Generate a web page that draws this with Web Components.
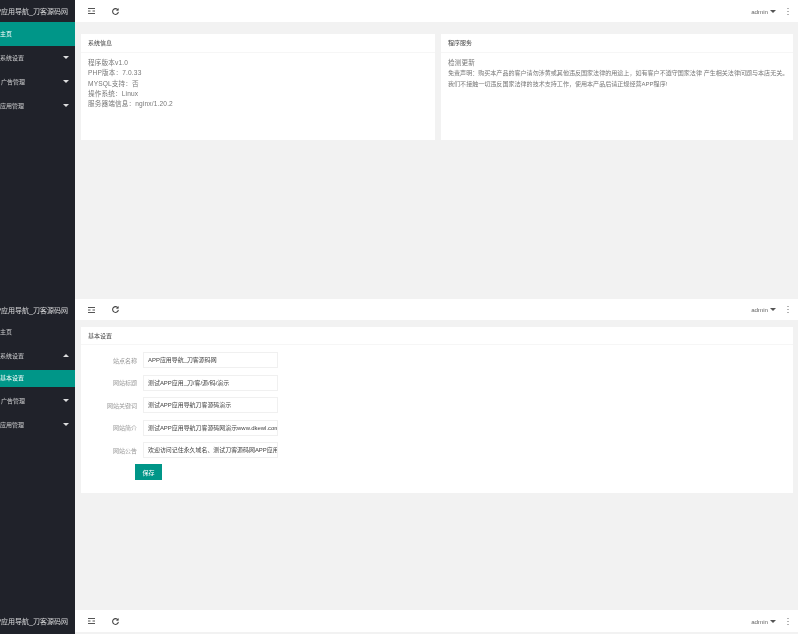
<!DOCTYPE html>
<html lang="zh">
<head>
<meta charset="utf-8">
<title>APP应用导航</title>
<style>
  html, body { margin: 0; height: 100%; overflow: hidden; background: #f2f2f2; }
  body { font: 7px "Liberation Sans", "Noto Sans CJK SC", sans-serif; color: #666; }
</style>
</head>
<body>
  <admin-screen style="--h:299px;--bar:22px">
    <nav-item slot="nav" active>主页</nav-item>
    <nav-item slot="nav" caret="down">系统设置</nav-item>
    <nav-item slot="nav" caret="down" indent="1">广告管理</nav-item>
    <nav-item slot="nav" caret="down">应用管理</nav-item>
    <card-row>
      <info-card heading="系统信息">
        <div class="big">程序版本v1.0<br>PHP版本：7.0.33<br>MYSQL支持：否<br>操作系统：Linux<br>服务器端信息：nginx/1.20.2</div>
      </info-card>
      <info-card heading="程序服务">
        <div class="big">检测更新</div>
        <div class="small">免责声明：购买本产品的客户请勿涉黄或其他违反国家法律的用途上，如有客户不遵守国家法律 产生相关法律问题与本店无关。<br>我们不接触一切违反国家法律的技术支持工作，使用本产品后请正规经营APP程序!</div>
      </info-card>
    </card-row>
  </admin-screen>

  <admin-screen style="--h:311px;--bar:21px">
    <nav-item slot="nav">主页</nav-item>
    <nav-item slot="nav" caret="up">系统设置</nav-item>
    <nav-sub slot="nav">基本设置</nav-sub>
    <nav-item slot="nav" caret="down" indent="1">广告管理</nav-item>
    <nav-item slot="nav" caret="down">应用管理</nav-item>
    <settings-form>
      <form-row label="站点名称">APP应用导航_刀客源码网</form-row>
      <form-row label="网站标题">测试APP应用_刀/客/源/码/演示</form-row>
      <form-row label="网站关键词">测试APP应用导航刀客源码演示</form-row>
      <form-row label="网站简介">测试APP应用导航刀客源码网演示www.dkewl.com</form-row>
      <form-row label="网站公告">欢迎访问记住永久域名、测试刀客源码网APP应用导航</form-row>
    </settings-form>
  </admin-screen>

  <admin-screen style="--h:24px;--bar:22px"></admin-screen>

<script>
class AdminScreen extends HTMLElement {
  constructor() {
    super();
    this.attachShadow({mode: 'open'}).innerHTML = `
      <style>
        :host { display: grid; grid-template-columns: 75px 1fr; height: var(--h); background: #f2f2f2; filter: blur(.35px); }
        .side { background: #20222a; overflow: hidden; }
        .brand { height: var(--bar); display: flex; justify-content: flex-end; align-items: center;
                 padding-right: 7px; font-size: 7px; color: rgba(255,255,255,.8); white-space: nowrap; }
        .main { min-width: 0; display: flex; flex-direction: column; }
        .top { height: var(--bar); flex: none; background: #fff; display: flex; align-items: center; padding: 0 9px 0 13px; color: #555; }
        .top svg { display: block; }
        .refresh { margin-left: 17px; }
        .user { margin-left: auto; display: flex; align-items: center; gap: 2px; font-size: 6.2px; color: #666; }
        .user i { border: 3px solid transparent; border-top-color: #555; border-bottom: 0; width: 0; height: 0; }
        .more { margin-left: 11px; }
      </style>
      <div class="side">
        <div class="brand"><span>APP应用导航_刀客源码网</span></div>
        <slot name="nav"></slot>
      </div>
      <div class="main">
        <div class="top">
          <svg width="7" height="6" viewBox="0 0 7 6" fill="none" stroke="#555" stroke-width="1"><path d="M0 .5h7M0 3h2.5M4.5 3h2.5M0 5.5h7"/></svg>
          <svg class="refresh" width="7" height="7" viewBox="0 0 8 8" fill="none" stroke="#444" stroke-width="1.2"><path d="M6.8 2.2A3.3 3.3 0 1 0 7.3 4.5"/><path d="M7.2.4v2.3H4.9" stroke-width=".9"/></svg>
          <div class="user"><span>admin</span><i></i></div>
          <svg class="more" width="2" height="7" viewBox="0 0 2 7" fill="#666"><rect x=".5" width="1" height="1"/><rect x=".5" y="3" width="1" height="1"/><rect x=".5" y="6" width="1" height="1"/></svg>
        </div>
        <slot></slot>
      </div>`;
  }
}

class NavItem extends HTMLElement {
  constructor() {
    super();
    this.attachShadow({mode: 'open'}).innerHTML = `
      <style>
        :host { display: flex; align-items: center; box-sizing: border-box; height: 24px; padding: 0 6px 1px 0; font-size: 6px; color: rgba(255,255,255,.75); }
        :host([active]) { background: #009688; color: #fff; }
        :host([indent]) { padding-left: 1px; }
        span { flex: 1; white-space: nowrap; }
        i { width: 0; height: 0; border: 3px solid transparent; }
        i.down { border-top-color: rgba(255,255,255,.85); border-bottom: 0; }
        i.up { border-bottom-color: rgba(255,255,255,.85); border-top: 0; }
      </style>
      <span><slot></slot></span><i></i>`;
  }
  connectedCallback() {
    this.shadowRoot.querySelector('i').className = this.getAttribute('caret') || '';
  }
}

class NavSub extends HTMLElement {
  constructor() {
    super();
    this.attachShadow({mode: 'open'}).innerHTML = `
      <style>
        :host { display: block; padding: 2px 0; }
        div { height: 17px; line-height: 17px; background: #009688; color: #fff; font-size: 6px; white-space: nowrap; }
      </style>
      <div><slot></slot></div>`;
  }
}

class CardRow extends HTMLElement {
  constructor() {
    super();
    this.attachShadow({mode: 'open'}).innerHTML = `
      <style>
        :host { display: grid; grid-template-columns: 354px 352px; gap: 6px; padding: 12px 0 0 6px; }
      </style>
      <slot></slot>`;
  }
}

class InfoCard extends HTMLElement {
  constructor() {
    super();
    this.attachShadow({mode: 'open'}).innerHTML = `
      <style>
        :host { display: block; height: 106px; background: #fff; }
        .head { height: 18px; line-height: 19px; padding: 0 7px; font-size: 6px; color: #444; border-bottom: 1px solid #f6f6f6; }
        .body { padding: 5px 7px; }
        ::slotted(.big) { font-size: 6.6px; letter-spacing: .15px; line-height: 10.3px; color: #777; }
        ::slotted(.small) { font-size: 6.05px; line-height: 10.3px; color: #777; white-space: nowrap; }
      </style>
      <div class="head"></div>
      <div class="body"><slot></slot></div>`;
  }
  connectedCallback() {
    this.shadowRoot.querySelector('.head').textContent = this.getAttribute('heading');
  }
}

class SettingsForm extends HTMLElement {
  constructor() {
    super();
    this.attachShadow({mode: 'open'}).innerHTML = `
      <style>
        :host { display: block; margin: 7px 5px 0 6px; height: 166px; background: #fff; }
        .head { height: 17px; line-height: 18px; padding: 0 7px; font-size: 6px; color: #444; border-bottom: 1px solid #f6f6f6; }
        .rows { display: flex; flex-direction: column; gap: 6.5px; padding: 7px 0 0; }
        button { display: block; margin: 6px 0 0 54px; width: 27px; height: 16px; border: 0; padding: 0;
                 background: #009688; color: #fff; font: inherit; font-size: 6px; }
      </style>
      <div class="head">基本设置</div>
      <div class="rows"><slot></slot></div>
      <button>保存</button>`;
  }
}

class FormRow extends HTMLElement {
  constructor() {
    super();
    this.attachShadow({mode: 'open'}).innerHTML = `
      <style>
        :host { display: flex; align-items: center; height: 16px; }
        label { width: 56px; text-align: right; font-size: 6px; color: #999; white-space: nowrap; }
        .input { margin-left: 6px; width: 135px; height: 16px; box-sizing: border-box; padding: 0 4px; line-height: 15px;
                 border: 1px solid #f0f0f0; background: #fff; font-size: 5.95px; color: #444; overflow: hidden; white-space: nowrap; }
      </style>
      <label></label>
      <div class="input"><slot></slot></div>`;
  }
  connectedCallback() {
    this.shadowRoot.querySelector('label').textContent = this.getAttribute('label');
  }
}

customElements.define('admin-screen', AdminScreen);
customElements.define('nav-item', NavItem);
customElements.define('nav-sub', NavSub);
customElements.define('card-row', CardRow);
customElements.define('info-card', InfoCard);
customElements.define('settings-form', SettingsForm);
customElements.define('form-row', FormRow);
</script>
</body>
</html>
